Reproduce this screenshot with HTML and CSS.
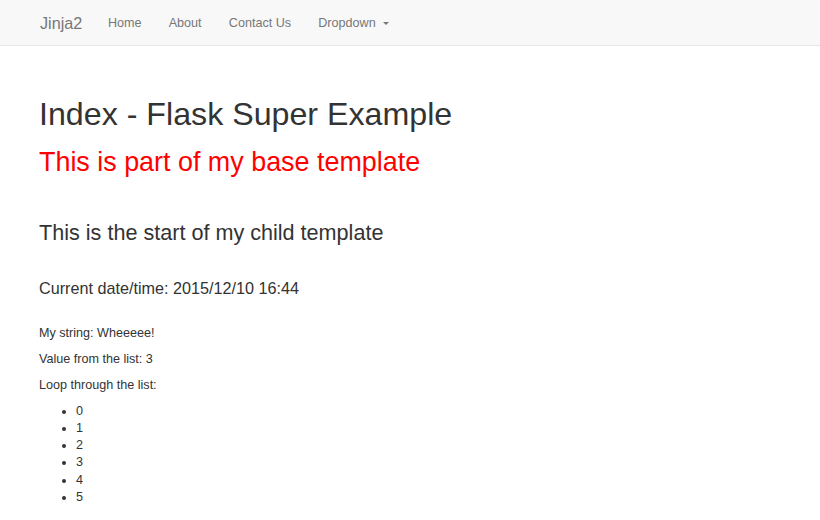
FILE: index.html
```html
<!DOCTYPE html>
<html lang="en">
<head>
<meta charset="utf-8">
<title>Index - Flask Super Example</title>
<link rel="stylesheet" href="styles.css">
</head>
<body>
<nav class="navbar">
  <div class="navbar-inner">
    <a class="brand" href="#">Jinja2</a>
    <ul class="nav">
      <li><a href="#">Home</a></li>
      <li><a href="#">About</a></li>
      <li><a href="#">Contact Us</a></li>
      <li><a href="#">Dropdown <span class="caret"></span></a></li>
    </ul>
  </div>
</nav>
<main class="container">
  <h1 class="title">Index - Flask Super Example</h1>
  <h2 class="base">This is part of my base template</h2>
  <h3 class="child">This is the start of my child template</h3>
  <h4 class="date">Current date/time: 2015/12/10 16:44</h4>
  <p class="line">My string: Wheeeee!</p>
  <p class="line">Value from the list: 3</p>
  <p class="line">Loop through the list:</p>
  <ul class="list">
    <li>0</li>
    <li>1</li>
    <li>2</li>
    <li>3</li>
    <li>4</li>
    <li>5</li>
  </ul>
</main>
</body>
</html>
```
FILE: styles.css
```css
* { box-sizing: border-box; }
html, body { margin: 0; padding: 0; background: #fff; }
body {
  font-family: "Liberation Sans", Arial, Helvetica, sans-serif;
  font-size: 12.6px;
  line-height: 17.2px;
  color: #333;
}
a { text-decoration: none; }

.navbar {
  background: #f8f8f8;
  border-bottom: 1px solid #e7e7e7;
}
.navbar-inner {
  display: flex;
  align-items: flex-start;
  padding-left: 26.5px;
}
.brand {
  display: block;
  padding: 13.5px 12px 13.5px 13.5px;
  font-size: 16.2px;
  line-height: 18px;
  color: #777;
}
.nav {
  display: flex;
  list-style: none;
  margin: 0;
  padding: 0;
}
.nav a {
  display: block;
  padding: 13.5px 13.6px;
  line-height: 18px;
  color: #777;
}
.caret {
  display: inline-block;
  width: 0;
  height: 0;
  margin-left: 4px;
  vertical-align: middle;
  border-top: 3px solid #777;
  border-left: 3px solid transparent;
  border-right: 3px solid transparent;
}

.container {
  padding: 0 39px;
}
.title {
  margin: 50.5px 0 0;
  font-size: 32.2px;
  line-height: 35.6px;
  font-weight: 500;
  color: #333;
}
.base {
  margin: 15.7px 0 0;
  font-size: 26.9px;
  line-height: 29.7px;
  font-weight: 500;
  color: #f00;
}
.child {
  margin: 44px 0 0;
  font-size: 21.6px;
  line-height: 23.8px;
  font-weight: 500;
}
.date {
  margin: 35px 0 0;
  font-size: 16.2px;
  line-height: 17.8px;
  font-weight: 500;
}
.line {
  margin: 0 0 8.8px;
}
.line:first-of-type {
  margin-top: 26.7px;
}
.list {
  margin: 0;
  padding-left: 37px;
}
```
